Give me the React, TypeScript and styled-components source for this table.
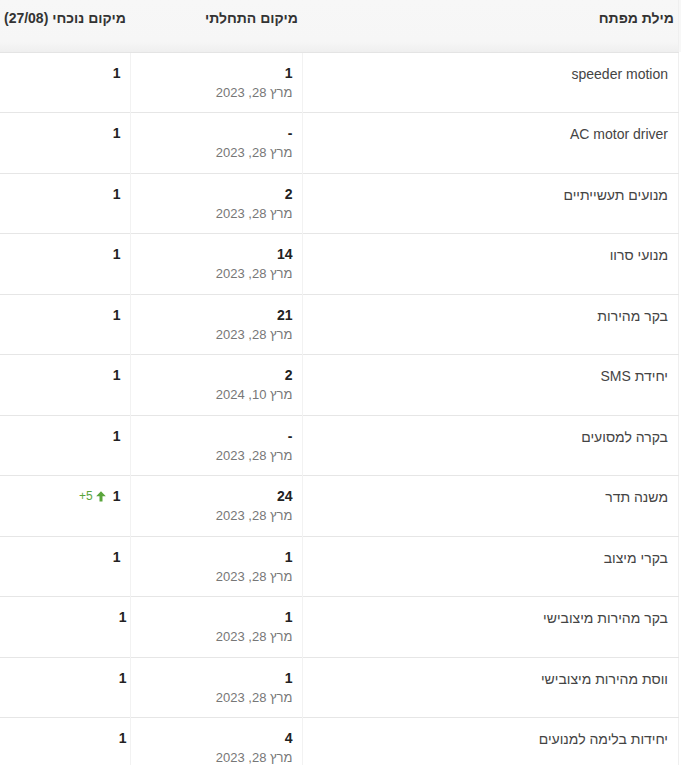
import React from 'react';
import styled, { createGlobalStyle } from 'styled-components';

interface Row {
	keyword: string;
	start: string;
	date: string;
	current: string;
	change?: string;
	tight?: boolean;
}

const rows: Row[] = [
	{ keyword: 'speeder motion', start: '1', date: 'מרץ 28, 2023', current: '1' },
	{ keyword: 'AC motor driver', start: '-', date: 'מרץ 28, 2023', current: '1' },
	{ keyword: 'מנועים תעשייתיים', start: '2', date: 'מרץ 28, 2023', current: '1' },
	{ keyword: 'מנועי סרוו', start: '14', date: 'מרץ 28, 2023', current: '1' },
	{ keyword: 'בקר מהירות', start: '21', date: 'מרץ 28, 2023', current: '1' },
	{ keyword: 'יחידת SMS', start: '2', date: 'מרץ 10, 2024', current: '1' },
	{ keyword: 'בקרה למסועים', start: '-', date: 'מרץ 28, 2023', current: '1' },
	{ keyword: 'משנה תדר', start: '24', date: 'מרץ 28, 2023', current: '1', change: '+5' },
	{ keyword: 'בקרי מיצוב', start: '1', date: 'מרץ 28, 2023', current: '1' },
	{ keyword: 'בקר מהירות מיצובישי', start: '1', date: 'מרץ 28, 2023', current: '1', tight: true },
	{ keyword: 'ווסת מהירות מיצובישי', start: '1', date: 'מרץ 28, 2023', current: '1', tight: true },
	{ keyword: 'יחידות בלימה למנועים', start: '4', date: 'מרץ 28, 2023', current: '1', tight: true }
];

const GlobalStyle = createGlobalStyle`
	html, body {
		margin: 0;
		padding: 0;
		background: #fff;
	}
	body {
		font-family: 'Liberation Sans', Arial, sans-serif;
		overflow: hidden;
	}
`;

const App = () => {
	return (
		<>
			<GlobalStyle />
			<Wrap dir="rtl">
				<Table>
					<thead>
						<tr>
							<HeadCell>מילת מפתח</HeadCell>
							<HeadCell width={172}>מיקום התחלתי</HeadCell>
							<HeadCell width={130}>מיקום נוכחי (27/08)</HeadCell>
						</tr>
					</thead>
					<tbody>
						{rows.map((row, i) => (
							<tr key={i}>
								<KeywordCell>{row.keyword}</KeywordCell>
								<Cell>
									<Rank>{row.start}</Rank>
									<DateText>{row.date}</DateText>
								</Cell>
								<Cell>
									<Current tight={row.tight}>
										<Rank>{row.current}</Rank>
										{row.change && (
											<Change dir="ltr">
												<span>{row.change}</span>
												<svg width="10" height="11" viewBox="0 0 10 11">
													<path d="M5 0.3 L9.8 5.3 L6.5 5.3 L6.5 10.6 L3.5 10.6 L3.5 5.3 L0.2 5.3 Z" fill="#5aa53c" />
												</svg>
											</Change>
										)}
									</Current>
								</Cell>
							</tr>
						))}
					</tbody>
				</Table>
			</Wrap>
		</>
	);
};

export default App;

const Wrap = styled.div`
	width: 681px;
	overflow: hidden;
	background: linear-gradient(#f7f7f7, #f7f7f7) top / 100% 52px no-repeat;
`;

const Table = styled.table`
	width: 679px;
	margin-right: 2px;
	border-collapse: collapse;
	table-layout: fixed;
	border-right: 1px solid #efefef;
	tbody tr {
		height: 60.5px;
	}
`;

const HeadCell = styled.th<{ width?: number }>`
	width: ${(props) => (props.width ? `${props.width}px` : 'auto')};
	height: 52px;
	box-sizing: border-box;
	padding: 9px 4px 0 4px;
	vertical-align: top;
	text-align: right;
	font-size: 14px;
	line-height: 18px;
	font-weight: bold;
	color: #333;
	white-space: nowrap;
	background: linear-gradient(#f7f7f7 0%, #f6f6f6 80%, #efefef 100%);
	border-bottom: 1px solid #e4e4e4;
`;

const Cell = styled.td`
	box-sizing: border-box;
	padding: 10px 9px 0;
	vertical-align: top;
	text-align: right;
	border-top: 1px solid #e6e6e6;
	border-left: 1px solid #f2f2f2;
	&:last-child {
		border-left: none;
	}
`;

const KeywordCell = styled(Cell)`
	padding: 11px 10px 0;
	font-size: 14px;
	line-height: 20px;
	color: #444;
`;

const Rank = styled.div`
	font-size: 14px;
	line-height: 20px;
	font-weight: bold;
	color: #222;
`;

const DateText = styled.div`
	font-size: 13px;
	line-height: 20px;
	color: #777;
`;

const Current = styled.div<{ tight?: boolean }>`
	display: flex;
	align-items: center;
	gap: 7px;
	margin-right: ${(props) => (props.tight ? '-6px' : '0')};
`;

const Change = styled.span`
	display: flex;
	align-items: center;
	gap: 3px;
	font-size: 12px;
	color: #5aa53c;
	svg {
		display: block;
	}
`;
